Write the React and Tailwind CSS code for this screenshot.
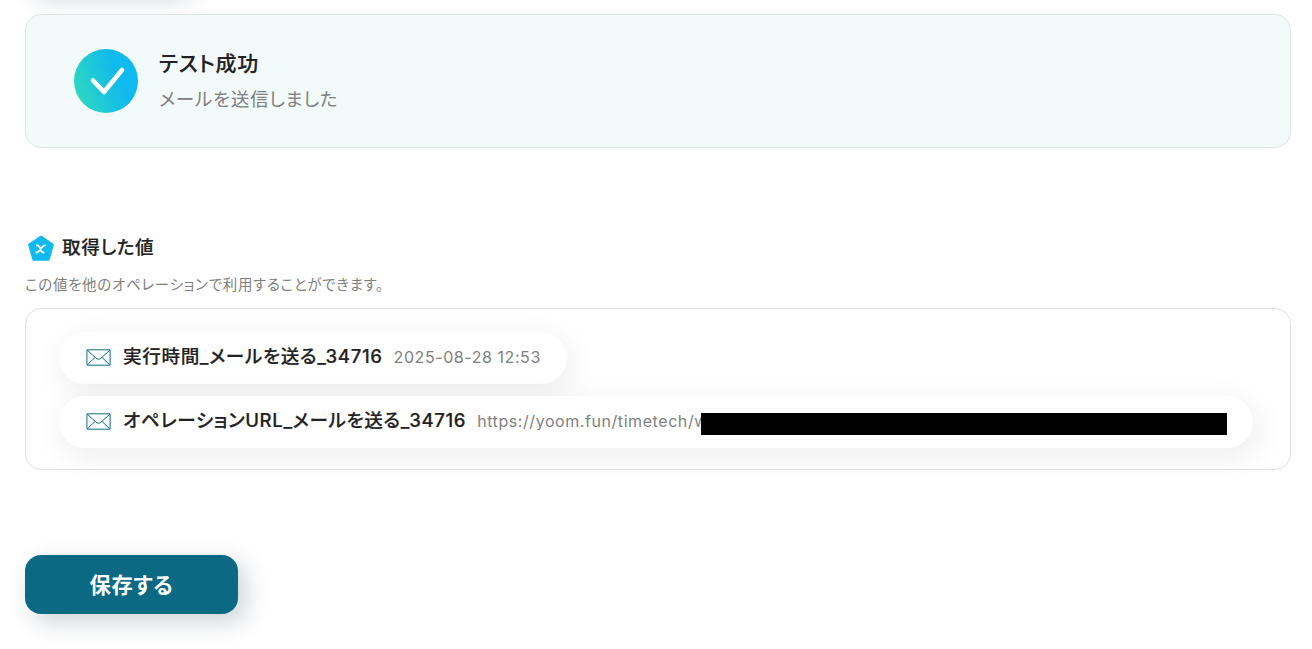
const variables = [
  { name: '実行時間_メールを送る_34716', value: '2025-08-28 12:53', masked: false },
  { name: 'オペレーションURL_メールを送る_34716', value: 'https://yoom.fun/timetech/w', masked: true },
];

function CheckIcon() {
  return (
    <svg width="64" height="64" viewBox="0 0 64 64" fill="none">
      <defs>
        <linearGradient id="check-bg" x1="4" y1="48" x2="48" y2="32" gradientUnits="userSpaceOnUse">
          <stop stopColor="#2cd7c2" />
          <stop offset="1" stopColor="#10b9ee" />
        </linearGradient>
      </defs>
      <circle cx="32" cy="32" r="32" fill="url(#check-bg)" />
      <path d="M19 31.5 30 43 48 21" stroke="#fff" strokeWidth="4.6" strokeLinecap="round" strokeLinejoin="round" />
    </svg>
  );
}

function PentagonIcon() {
  return (
    <svg width="26" height="26" viewBox="0 0 26 26" fill="none">
      <path d="M13 2.6 24 10 20 24H6L2 10Z" fill="#10b9ee" stroke="#10b9ee" strokeWidth="3.6" strokeLinejoin="round" />
      <path d="M8.9 10.4c1.4 0 2 .3 2.5 1.4l1.8 4.4c.5 1 1 1.4 2.5 1.3M17.1 10.4c-1.2 0-1.7.4-2.5 1.3l-3.7 4.4c-.8 1-1.4 1.4-2.7 1.4" stroke="#fff" strokeWidth="1.8" strokeLinecap="round" />
    </svg>
  );
}

function MailIcon() {
  return (
    <svg width="25" height="17" viewBox="0 0 25 17" fill="none" stroke="#0b6a83" strokeWidth="1">
      <rect x=".9" y=".8" width="23.2" height="15.4" rx=".6" />
      <path d="M1.2 1.2 10.2 9.3c1.4 1.2 3.2 1.2 4.6 0l9-8.1M1.3 15.9 9 8.4M23.7 15.9 16 8.4" />
    </svg>
  );
}

export default function App() {
  return (
    <div className="h-[649px] overflow-hidden bg-white pl-[25px] pr-[21px] font-['Inter','Noto_Sans_CJK_JP',sans-serif] text-[#222] [font-feature-settings:'palt']">
      <div className="-mt-[68px] h-[59px] w-[160px] rounded-2xl bg-[#0b6983] shadow-[8px_8px_24px_rgba(10,40,60,0.2)]" />

      <section className="mt-[23px] flex h-[134px] items-center gap-[21px] rounded-2xl border border-[#e2e4e4] bg-[#f2fafa] pl-12">
        <CheckIcon />
        <div>
          <p className="text-[21px] leading-[37px] font-medium tracking-[0.8px] [-webkit-text-stroke:0.2px_#222]">テスト成功</p>
          <p className="text-[18.6px] leading-[35px] tracking-[0.65px] text-[#808080]">メールを送信しました</p>
        </div>
      </section>

      <section className="mt-[85px]">
        <div className="flex h-[30px] items-center gap-2 pl-[3px]">
          <PentagonIcon />
          <h2 className="-mt-px text-[18.6px] font-medium tracking-[0.6px] [-webkit-text-stroke:0.2px_#222]">取得した値</h2>
        </div>
        <p className="mt-3 h-[33px] text-[14.5px] leading-[20px] tracking-[0.68px] text-[#808080]">
          この値を他のオペレーションで利用することができます。
        </p>
        <div className="flex h-[162px] flex-col items-start gap-3 rounded-2xl border border-[#e0e0e0] pt-[22.5px] pl-[33px]">
          {variables.map((item) => (
            <div
              key={item.name}
              className="flex h-[52px] items-center rounded-full bg-white pr-[26px] pl-[27px] whitespace-nowrap shadow-[4px_8px_32px_rgba(0,0,0,0.08)]"
            >
              <MailIcon />
              <span className="-mt-[1.5px] ml-3 text-[18.6px] font-medium tracking-[0.62px] [-webkit-text-stroke:0.2px_#222]">{item.name}</span>
              <span className="-mt-px ml-[11px] text-[16px] tracking-[0.57px] text-[#808080]">{item.value}</span>
              {item.masked && <span className="mt-[5px] -ml-[7px] h-[22px] w-[526px] bg-black" />}
            </div>
          ))}
        </div>
      </section>

      <button className="mt-[85px] h-[59px] w-[213px] rounded-2xl bg-[#0b6983] pt-0.5 text-[21.3px] font-bold tracking-[0.7px] text-white shadow-[8px_8px_24px_rgba(10,40,60,0.2)]">
        保存する
      </button>
    </div>
  );
}
